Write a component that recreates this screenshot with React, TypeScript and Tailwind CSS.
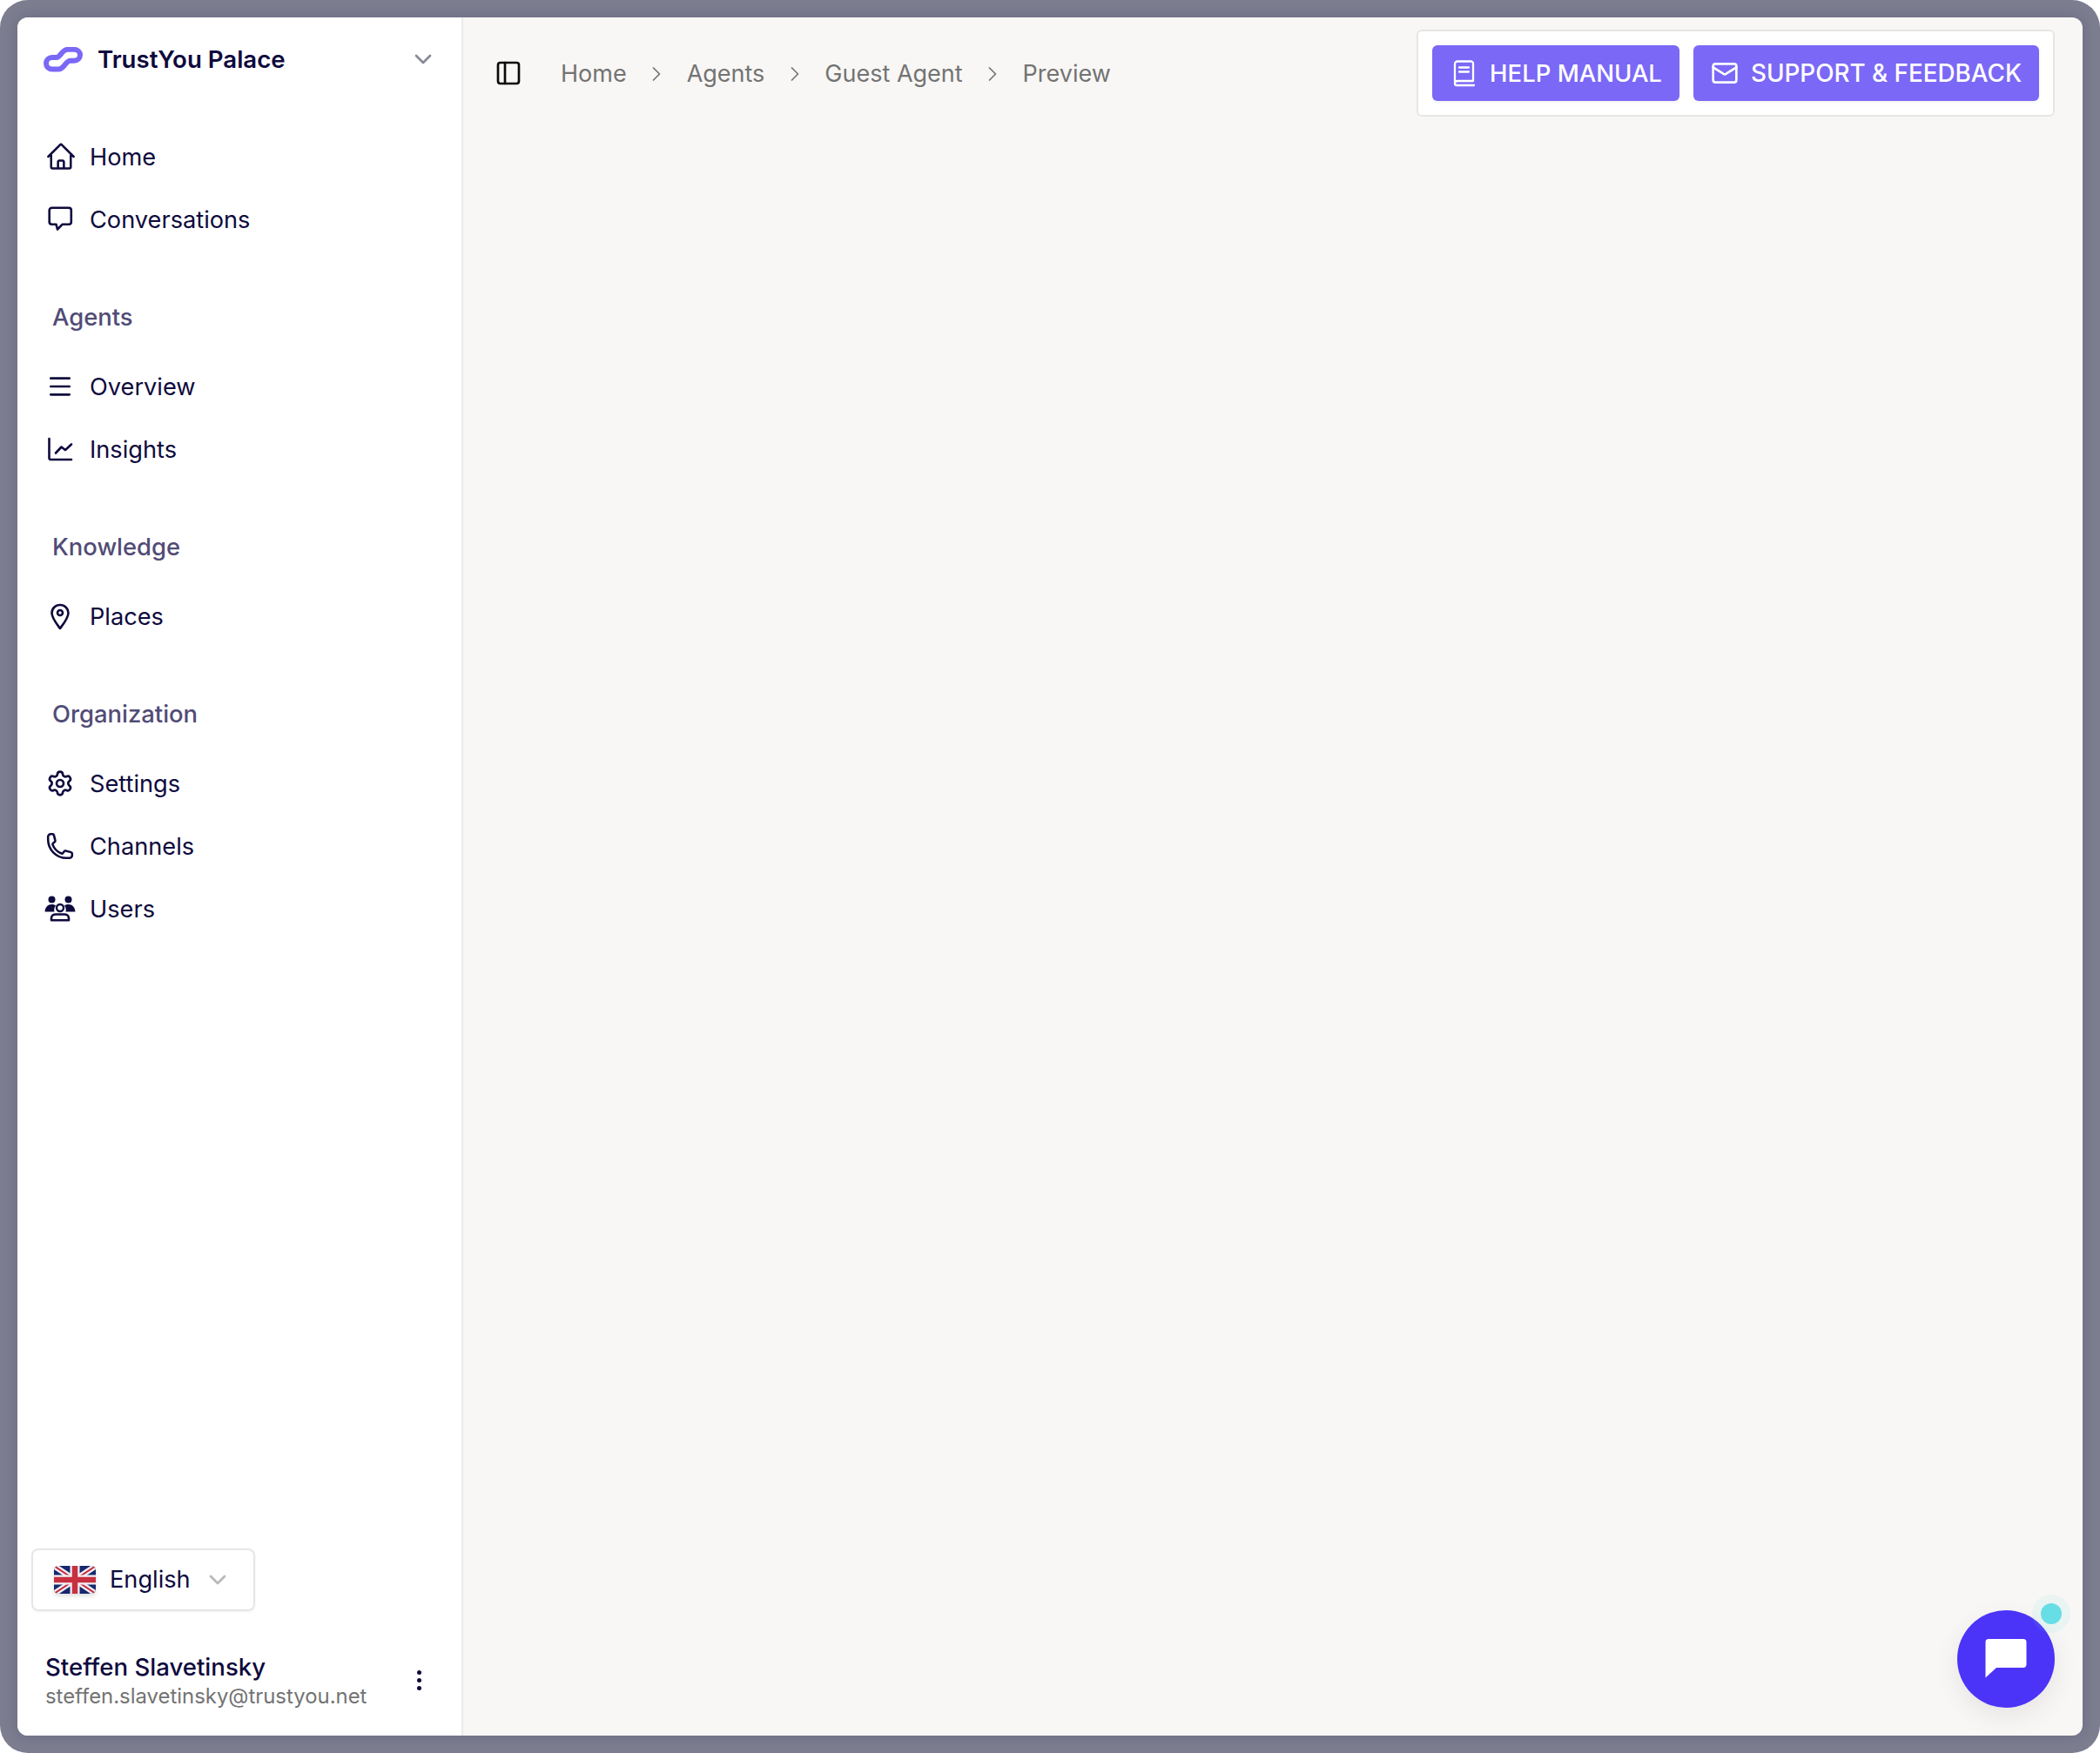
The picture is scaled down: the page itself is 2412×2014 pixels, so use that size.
import { ChevronDown, ChevronRight, Mail, Menu, PanelLeft, Settings } from "lucide-react"
import type { ReactNode } from "react"

const navy = "text-[#0e0a3d]"

function Logo() {
  return (
    <svg width="46" height="29" viewBox="0 0 46 29" fill="none" className="shrink-0">
      <path
        d="M10 12H15C19.500 12 21 2.800 28 2.800H35C39 2.800 42 5.800 42 9.300C42 12.800 39 15.800 35 15.800H31C25 15.800 24 25.500 17 25.500H10C6 25.500 3 22.500 3 18.700C3 15 6 12 10 12Z"
        stroke="#7a68f6"
        strokeWidth="6"
      />
    </svg>
  )
}

function HomeIcon() {
  return (
    <svg width="36" height="36" viewBox="0 0 24 24" fill="none" stroke="currentColor" strokeWidth="1.700" strokeLinecap="round" strokeLinejoin="round" className="mx-[-2px] translate-x-px">
      <path d="m2.250 12 8.954-8.955c.44-.439 1.152-.439 1.591 0L21.750 12M4.500 9.750v10.125c0 .621.504 1.125 1.125 1.125H9.750v-4.875c0-.621.504-1.125 1.125-1.125h2.250c.621 0 1.125.504 1.125 1.125V21h4.125c.621 0 1.125-.504 1.125-1.125V9.750M8.250 21h8.250" />
    </svg>
  )
}

function BubbleIcon() {
  return (
    <svg width="32" height="32" viewBox="0 0 32 32" fill="none" stroke="currentColor" strokeWidth="2.600" strokeLinejoin="round">
      <path d="M6.500 2.800H26A2.800 2.800 0 0 1 28.800 5.600V19A2.800 2.800 0 0 1 26 21.800H18.500L13 27.500L11.500 21.800H6.500A2.800 2.800 0 0 1 3.700 19V5.600A2.800 2.800 0 0 1 6.500 2.800Z" />
    </svg>
  )
}

function ChartIcon() {
  return (
    <svg width="32" height="32" viewBox="0 0 32 32" fill="none" stroke="currentColor" strokeWidth="2.600" strokeLinecap="round" strokeLinejoin="round">
      <path d="M3.500 4V26.500A1.500 1.500 0 0 0 5 28H29" />
      <path d="M11 20.500L17.500 13.500L22 17L29 10.500" />
    </svg>
  )
}

function PinIcon() {
  return (
    <svg width="32" height="32" viewBox="0 0 32 32" fill="none" stroke="currentColor" strokeWidth="2.600" strokeLinejoin="round">
      <path d="M16 3C10.500 3 6.500 7.200 6.500 12.300C6.500 18 11.800 24.500 16 30C20.200 24.500 25.500 18 25.500 12.300C25.500 7.200 21.500 3 16 3Z" />
      <circle cx="16" cy="12" r="3" />
    </svg>
  )
}

function PhoneIcon() {
  return (
    <svg width="34" height="34" viewBox="0 0 24 24" fill="none" stroke="currentColor" strokeWidth="1.800" strokeLinejoin="round" className="mx-[-1px]">
      <path d="M2.250 6.750c0 8.284 6.716 15 15 15h2.250a2.250 2.250 0 0 0 2.250-2.250v-1.372c0-.516-.351-.966-.852-1.091l-4.423-1.106c-.44-.11-.902.055-1.173.417l-.97 1.293c-.282.376-.769.542-1.210.38a12.035 12.035 0 0 1-7.143-7.143c-.162-.441.004-.928.38-1.210l1.293-.97c.363-.271.527-.734.417-1.173L6.963 3.102a1.125 1.125 0 0 0-1.091-.852H4.500A2.250 2.250 0 0 0 2.250 4.500v2.250Z" />
    </svg>
  )
}

function UsersIcon() {
  return (
    <svg width="36" height="30" viewBox="0 0 36 30" className="mx-[-2px]">
      <circle cx="8.500" cy="4.500" r="4" fill="currentColor" />
      <circle cx="27.500" cy="4.500" r="4" fill="currentColor" />
      <path d="M0.500 18.500C1 13 4 10 8.500 10C10.500 10 12 10.500 13 11.500C11 14 11 16.500 11.500 18.500Z" fill="currentColor" />
      <path d="M35.500 18.500C35 13 32 10 27.500 10C25.500 10 24 10.500 23 11.500C25 14 25 16.500 24.500 18.500Z" fill="currentColor" />
      <circle cx="18" cy="14" r="4" fill="none" stroke="currentColor" strokeWidth="2.400" />
      <path d="M8 28.300V26C8 23 10.500 21.500 13 21.500H23C25.500 21.500 28 23 28 26V28.300Z" fill="none" stroke="currentColor" strokeWidth="2.600" strokeLinejoin="round" />
    </svg>
  )
}

function BookIcon() {
  return (
    <svg width="32" height="32" viewBox="0 0 32 32" fill="none" stroke="white" strokeWidth="2.300" strokeLinecap="round" strokeLinejoin="round" className="shrink-0">
      <path d="M6 26V5.500A3 3 0 0 1 9 2.500H24A2.500 2.500 0 0 1 27 5V25H9A3 3 0 0 0 6 28A2 2 0 0 0 8 30H28" />
      <path d="M11 9.500H22" />
      <path d="M11 14.500H22" />
    </svg>
  )
}

function UkFlag() {
  return (
    <svg width="48" height="32" viewBox="0 0 48 32" className="shrink-0 rounded-[5px] shadow-[0_3px_5px_rgba(0,0,0,0.12)]">
      <rect width="48" height="32" fill="#17286e" />
      <path d="M0 0L48 32M48 0L0 32" stroke="#f2f0f4" strokeWidth="6.500" />
      <path d="M0 0L48 32M48 0L0 32" stroke="#c8303f" strokeWidth="2" />
      <path d="M24 0V32M0 16H48" stroke="#f2f0f4" strokeWidth="11" />
      <path d="M24 0V32M0 16H48" stroke="#c8303f" strokeWidth="6.500" />
    </svg>
  )
}

function NavItem({ icon, label }: { icon: ReactNode; label: string }) {
  return (
    <a className={`flex h-16 items-center gap-[18px] pl-[33px] text-[27.2px] ${navy}`}>
      <span className="flex w-8 shrink-0 items-center justify-center">{icon}</span>
      <span className="pt-[2px]">{label}</span>
    </a>
  )
}

function NavGroup({ label, children }: { label: string; children: ReactNode }) {
  return (
    <div className="mt-12 flex flex-col">
      <div className="mb-4 flex h-16 items-center pl-10 pt-[2px] text-[27.4px] font-medium text-[#514c76]">{label}</div>
      <div className="flex flex-col gap-2">{children}</div>
    </div>
  )
}

function Sidebar() {
  return (
    <aside className="flex w-[512px] shrink-0 flex-col border-r-2 border-[#ebebe9] bg-white">
      <div className="flex h-24 items-center pl-[30px] pr-[28px]">
        <Logo />
        <span className={`ml-[16px] flex-1 pt-[2px] text-[27.6px] font-semibold ${navy}`}>TrustYou Palace</span>
        <ChevronDown size={32} strokeWidth={2} className="text-[#88889a]" />
      </div>

      <div className="mt-8 flex flex-col gap-2">
        <NavItem icon={<HomeIcon />} label="Home" />
        <NavItem icon={<BubbleIcon />} label="Conversations" />
      </div>

      <NavGroup label="Agents">
        <NavItem icon={<Menu size={32} strokeWidth={2} />} label="Overview" />
        <NavItem icon={<ChartIcon />} label="Insights" />
      </NavGroup>

      <NavGroup label="Knowledge">
        <NavItem icon={<PinIcon />} label="Places" />
      </NavGroup>

      <NavGroup label="Organization">
        <NavItem icon={<Settings size={32} strokeWidth={2} />} label="Settings" />
        <NavItem icon={<PhoneIcon />} label="Channels" />
        <NavItem icon={<UsersIcon />} label="Users" />
      </NavGroup>

      <div className="mt-auto pl-4">
        <div className={`flex h-[72px] w-[257px] items-center rounded-lg border-2 border-[#e6e6e6] pl-[24px] text-[27.2px] shadow-[0_1px_3px_rgba(0,0,0,0.05)] ${navy}`}>
          <UkFlag />
          <span className="ml-[16px]">English</span>
          <ChevronDown size={32} strokeWidth={2} className="ml-[15px] text-[#b8b8b8]" />
        </div>
      </div>

      <div className="mt-[46px] flex items-center pb-[29px] pl-[32px] pr-[46px]">
        <div className="flex-1">
          <div className={`h-9 text-[27.6px] font-medium leading-9 ${navy}`}>Steffen Slavetinsky</div>
          <div className="h-8 text-[23.9px] leading-8 text-[#737373]">steffen.slavetinsky@trustyou.net</div>
        </div>
        <div className="mb-[2px] flex flex-col gap-[4px]">
          <span className="h-[5px] w-[5px] rounded-full bg-[#0e0a3d]" />
          <span className="h-[5px] w-[5px] rounded-full bg-[#0e0a3d]" />
          <span className="h-[5px] w-[5px] rounded-full bg-[#0e0a3d]" />
        </div>
      </div>
    </aside>
  )
}

function Breadcrumb() {
  const crumbs = ["Home", "Agents", "Guest Agent", "Preview"]
  return (
    <nav className="flex items-center gap-[20.5px] pt-[2px] text-[27px] text-[#737373]">
      {crumbs.map((crumb, i) => (
        <span key={crumb} className="flex items-center gap-[20.5px]">
          {i > 0 && <ChevronRight size={28} strokeWidth={1.5} />}
          {crumb}
        </span>
      ))}
    </nav>
  )
}

function ActionButton({ icon, label, size }: { icon: ReactNode; label: string; size: string }) {
  return (
    <button className={`flex h-16 items-center gap-[14px] rounded-md bg-[#7b68f6] px-5 font-medium text-white shadow-[0_2px_4px_rgba(0,0,0,0.05)] ${size}`}>
      {icon}
      <span className="pt-[1px]">{label}</span>
    </button>
  )
}

export default function App() {
  return (
    <div className="h-[2014px] w-[2412px] overflow-hidden bg-white font-[Inter,sans-serif]">
      <div className="flex h-full w-full rounded-[32px] bg-[#7d7d90] p-5">
        <div className="relative flex min-w-0 flex-1 overflow-hidden rounded-xl bg-[#f8f7f5] shadow-[0_0_16px_rgba(20,20,50,0.18)]">
          <Sidebar />

          <main className="min-w-0 flex-1">
            <header className="flex items-center justify-between pl-9 pr-8 pt-[14px]">
              <div className="flex items-center gap-[44px]">
                <PanelLeft size={32} strokeWidth={2} className="text-[#0a0a0a]" />
                <Breadcrumb />
              </div>
              <div className="flex gap-4 rounded-md border-2 border-[#e6e6e6] bg-white p-4">
                <ActionButton icon={<BookIcon />} label="HELP MANUAL" size="text-[27.5px]" />
                <ActionButton icon={<Mail size={32} strokeWidth={2} className="shrink-0" />} label="SUPPORT & FEEDBACK" size="text-[27.8px]" />
              </div>
            </header>
          </main>

          <div className="absolute bottom-[32px] right-[32px] flex h-[112px] w-[112px] items-center justify-center rounded-full bg-[#4b33f8] shadow-[0_10px_30px_rgba(0,0,0,0.08)]">
            <svg width="48" height="46" viewBox="0 0 48 46" fill="white">
              <path d="M4 0H44A3.500 3.500 0 0 1 47.500 3.500V29A4 4 0 0 1 43.500 33H13L0.500 44.500V3.500A3.500 3.500 0 0 1 4 0Z" />
            </svg>
            <span className="absolute right-[-18px] top-[-18px] flex h-[44px] w-[44px] items-center justify-center rounded-full bg-[#67dde6]/10">
              <span className="h-6 w-6 rounded-full bg-[#67dde6]" />
            </span>
          </div>
        </div>
      </div>
    </div>
  )
}
